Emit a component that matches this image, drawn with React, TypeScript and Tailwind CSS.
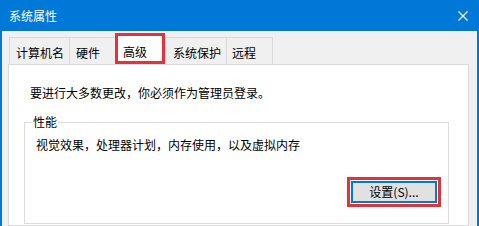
const tabs = [
  { label: '计算机名', w: 'w-[60px]', pl: 'pl-[6px]' },
  { label: '硬件', w: 'w-[46px]', pl: 'pl-[6px]' },
];

const tabsRight = [
  { label: '系统保护', w: 'w-[61px]', pl: 'pl-[7px]', last: false },
  { label: '远程', w: 'w-[47px]', pl: 'pl-[5px]', last: true },
];

const App = () => {
  return (
    <div className="w-[479px] h-[226px] flex flex-col overflow-hidden bg-[#f0f0f0] border-x-2 border-[#0078d7] text-[12px] leading-[16px] text-black font-['Noto_Sans_CJK_SC','Microsoft_YaHei',sans-serif]">
      {/* Title bar */}
      <div className="h-[31px] shrink-0 bg-[#0078d7] flex items-center pl-[7px] text-white">
        <span>系统属性</span>
        <svg className="ml-auto mr-[9px] w-[10px] h-[10px]" viewBox="0 0 10 10" aria-hidden="true">
          <path d="M0.5 0.5 L9.5 9.5 M9.5 0.5 L0.5 9.5" stroke="#fff" strokeWidth="1.1" fill="none" />
        </svg>
      </div>

      <div className="flex-1 flex flex-col pl-[6px] pr-[8px] pt-[2px]">
        {/* Tabs */}
        <div className="h-[31px] flex items-end pl-[1px]">
          {tabs.map((t) => (
            <div
              key={t.label}
              className={`${t.w} ${t.pl} h-[27px] pt-[7px] border-t border-l border-[#d9d9d9] bg-[#f0f0f0] whitespace-nowrap`}
            >
              {t.label}
            </div>
          ))}
          <div className="w-[50px] h-[31px] pl-[5px] pt-[8px] border-[3px] border-[#e53238] bg-white whitespace-nowrap">
            高级
          </div>
          {tabsRight.map((t) => (
            <div
              key={t.label}
              className={`${t.w} ${t.pl} h-[27px] pt-[7px] border-t border-l ${t.last ? 'border-r' : ''} border-[#d9d9d9] bg-[#f0f0f0] whitespace-nowrap`}
            >
              {t.label}
            </div>
          ))}
        </div>

        {/* Panel */}
        <div className="flex-1 bg-white border border-[#d9d9d9] pt-[20px] pl-[15px] pr-[19px]">
          <p className="ml-[6px] whitespace-nowrap">要进行大多数更改，你必须作为管理员登录。</p>

          <div className="relative mt-[21px] h-[102px] border border-[#dcdcdc] pt-[14px] pl-[11px] pr-[7px] flex flex-col">
            <span className="absolute left-[7px] top-[-9px] px-[1px] bg-white">性能</span>
            <p className="whitespace-nowrap">视觉效果，处理器计划，内存使用，以及虚拟内存</p>
            <div className="mt-[24px] flex justify-end">
              <div className="border-[3px] border-[#e53238] p-[1px] bg-white">
                <button className="w-[86px] h-[22px] border-2 border-[#0078d7] bg-[#e1e1e1] flex items-center justify-center">
                  设置(S)...
                </button>
              </div>
            </div>
          </div>
        </div>
      </div>
    </div>
  );
};

export default App;
